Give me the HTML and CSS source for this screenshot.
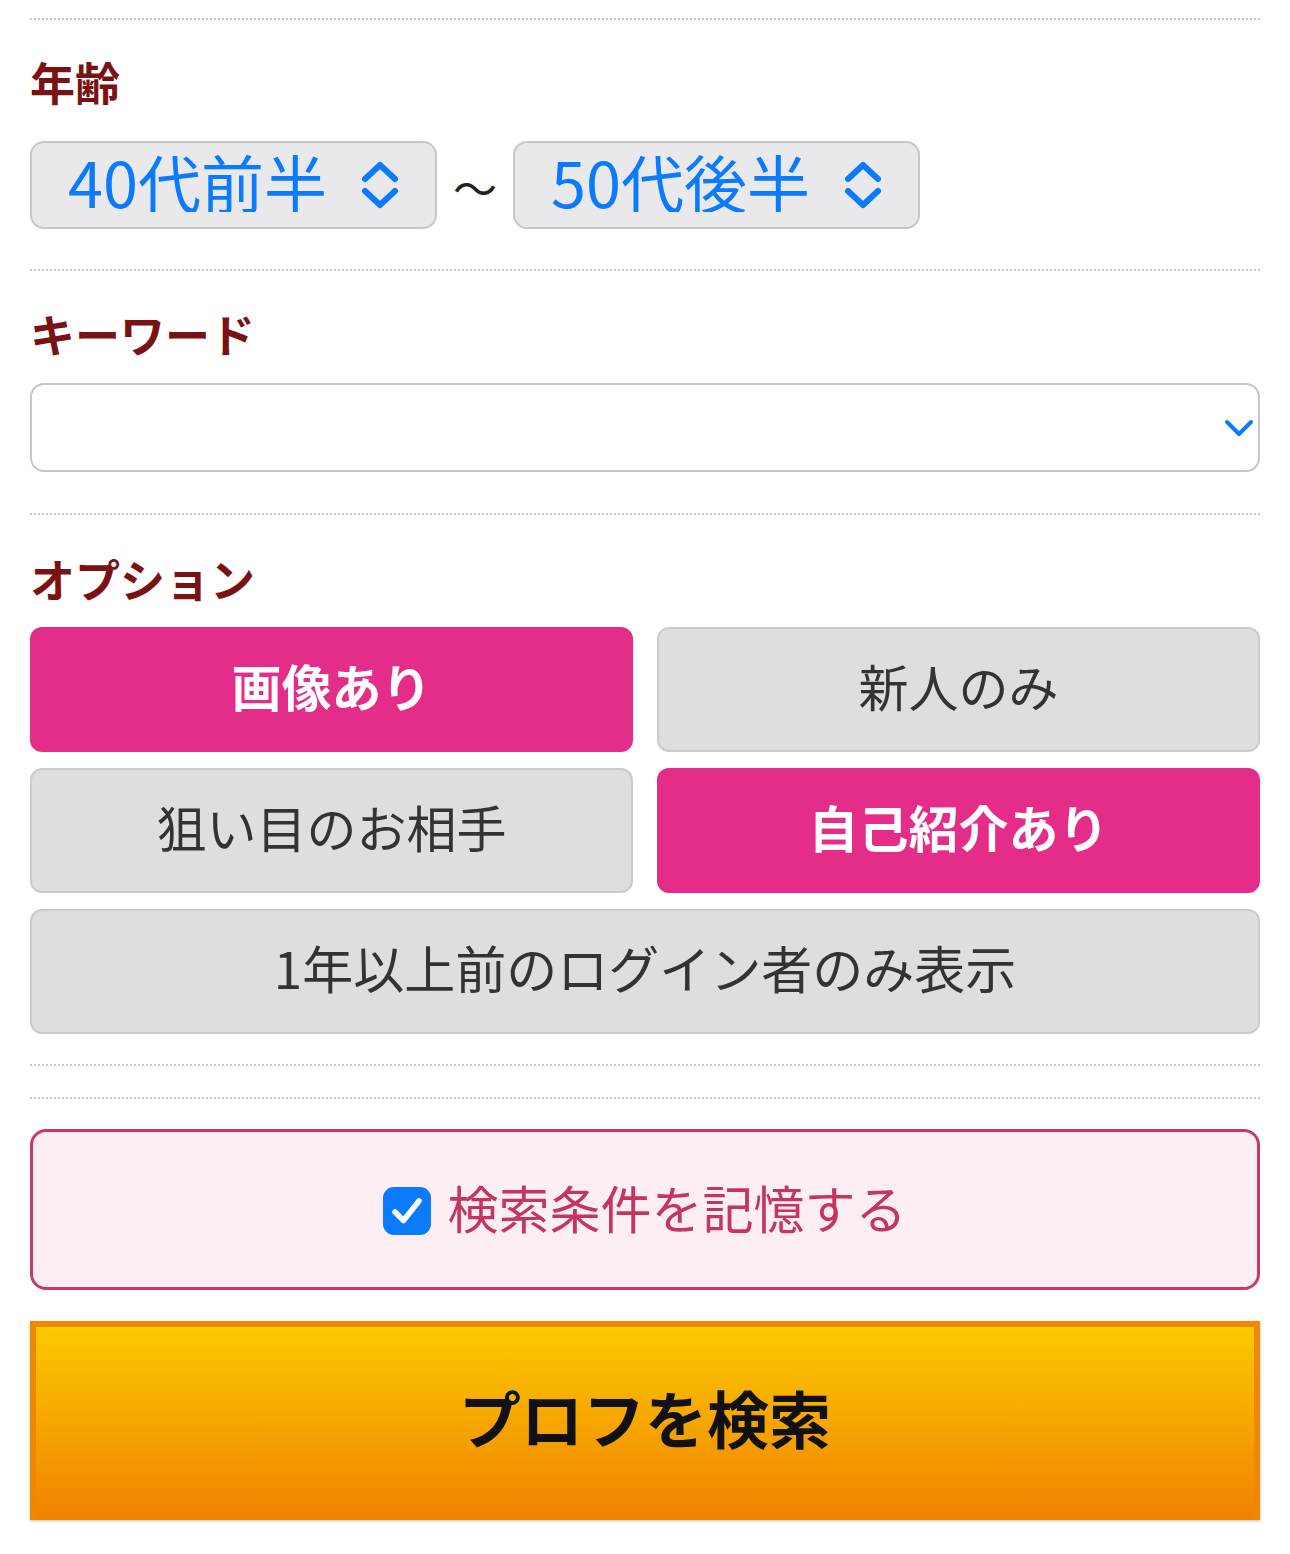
FILE: index.html
```html
<!DOCTYPE html>
<html lang="ja">
  <head>
    <meta charset="UTF-8" />
    <meta name="viewport" content="width=device-width, initial-scale=1.0" />
    <title>プロフ検索</title>
    <link rel="stylesheet" href="styles.css">
  </head>
  <body>
    <form class="search-form">
      <!-- 年齢 -->
      <section class="field field-age">
        <h2 class="field-title">年齢</h2>
        <div class="age-range">
          <label class="select-box">
            <select>
              <option>40代前半</option>
            </select>
            <svg class="updown" viewBox="0 0 42 50" width="42" height="50">
              <path d="M6 19 L21 5 L36 19 M6 31 L21 45 L36 31" fill="none" stroke="#0a7aff" stroke-width="6" stroke-linecap="round" stroke-linejoin="round"/>
            </svg>
          </label>
          <span class="tilde">〜</span>
          <label class="select-box">
            <select>
              <option>50代後半</option>
            </select>
            <svg class="updown" viewBox="0 0 42 50" width="42" height="50">
              <path d="M6 19 L21 5 L36 19 M6 31 L21 45 L36 31" fill="none" stroke="#0a7aff" stroke-width="6" stroke-linecap="round" stroke-linejoin="round"/>
            </svg>
          </label>
        </div>
      </section>

      <!-- キーワード -->
      <section class="field field-keyword">
        <h2 class="field-title">キーワード</h2>
        <label class="keyword-box">
          <select>
            <option></option>
          </select>
          <svg class="down" viewBox="0 0 30 18" width="30" height="18">
            <path d="M3 3 L15 15 L27 3" fill="none" stroke="#0a7aff" stroke-width="4" stroke-linecap="round" stroke-linejoin="round"/>
          </svg>
        </label>
      </section>

      <!-- オプション -->
      <section class="field field-option">
        <h2 class="field-title">オプション</h2>
        <div class="option-grid">
          <button type="button" class="option on">画像あり</button>
          <button type="button" class="option">新人のみ</button>
          <button type="button" class="option">狙い目のお相手</button>
          <button type="button" class="option on">自己紹介あり</button>
          <button type="button" class="option wide">1年以上前のログイン者のみ表示</button>
        </div>
      </section>

      <section class="field field-empty"></section>

      <section class="field field-submit">
        <div class="remember">
          <label class="remember-label">
            <span class="check">
              <svg viewBox="0 0 48 48" width="48" height="48">
                <rect x="0" y="0" width="48" height="48" rx="11" fill="#0a7aff"/>
                <path d="M12 25 L20.5 33.5 L36 14" fill="none" stroke="#fff" stroke-width="5.5" stroke-linecap="round" stroke-linejoin="round"/>
              </svg>
            </span>
            <span class="remember-text">検索条件を記憶する</span>
          </label>
        </div>

        <button type="submit" class="search-btn">プロフを検索</button>
      </section>
    </form>
  </body>
</html>
```

FILE: styles.css
```css
body {
  margin: 0;
  background: #fff;
  font-family: "Noto Sans CJK JP", "Noto Sans", sans-serif;
  color: #333;
}

.search-form {
  padding: 18px 30px 33px;
}

.field {
  border-top: 2px dotted #c9c9c9;
}

.field-title {
  margin: 0;
  font-size: 45px;
  line-height: 52px;
  font-weight: 700;
  color: #7a1214;
}

.field-age {
  padding: 36px 0 40px;
}

.field-age .field-title {
  margin-bottom: 33px;
}

.field-keyword {
  padding: 37px 0 41px;
}

.field-keyword .field-title {
  margin-bottom: 23px;
}

.field-option {
  padding: 38px 0 30px;
}

.field-option .field-title {
  margin-bottom: 22px;
}

.field-empty {
  height: 31px;
}

.field-submit {
  padding-top: 30px;
}

/* age selects */
.age-range {
  display: flex;
  align-items: center;
}

.select-box {
  display: flex;
  align-items: center;
  box-sizing: border-box;
  width: 407px;
  height: 88px;
  padding: 0 34px 0 36px;
  background: #e9e9eb;
  border: 2px solid #c7c7c9;
  border-radius: 14px;
}

.select-box select {
  flex: 1;
  appearance: none;
  -webkit-appearance: none;
  border: none;
  background: transparent;
  padding: 0;
  margin-bottom: 9px;
  font-family: inherit;
  font-size: 63px;
  line-height: 1;
  color: #0a7aff;
}

.updown {
  flex: none;
}

.tilde {
  width: 76px;
  text-align: center;
  font-size: 44px;
  color: #222;
  padding-top: 4px;
}

/* keyword */
.keyword-box {
  display: flex;
  align-items: center;
  box-sizing: border-box;
  height: 89px;
  padding: 0 4px 0 20px;
  background: #fff;
  border: 2px solid #c7c7c9;
  border-radius: 14px;
}

.keyword-box select {
  flex: 1;
  appearance: none;
  -webkit-appearance: none;
  border: none;
  background: transparent;
  font-size: 40px;
  font-family: inherit;
}

/* options */
.option-grid {
  display: grid;
  grid-template-columns: 1fr 1fr;
  gap: 16px 24px;
}

.option {
  height: 125px;
  border: 2px solid #cbcbcb;
  border-radius: 12px;
  background: #dedede;
  color: #333;
  font-family: inherit;
  font-size: 50px;
  font-weight: 400;
  padding: 0 0 10px;
  cursor: pointer;
}

.option.on {
  background: #e32d88;
  border-color: #e32d88;
  color: #fff;
  font-weight: 700;
}

.option.wide {
  grid-column: span 2;
  font-size: 51px;
}

/* remember */
.remember {
  display: flex;
  justify-content: center;
  align-items: center;
  box-sizing: border-box;
  height: 161px;
  margin-bottom: 31px;
  background: #fdeef4;
  border: 3px solid #c8386a;
  border-radius: 16px;
}

.remember-label {
  display: flex;
  align-items: center;
  gap: 16px;
  font-size: 51px;
  color: #c5365f;
  cursor: pointer;
}

.remember-text {
  margin-bottom: 6px;
}

.check {
  display: flex;
  margin-top: 2px;
}

/* search button */
.search-btn {
  display: block;
  box-sizing: border-box;
  width: 100%;
  height: 199px;
  padding: 0 0 14px;
  border: 6px solid #ef8700;
  border-bottom: none;
  background: linear-gradient(#fcc900, #f08200);
  box-shadow: 0 1px 3px rgba(0, 0, 0, 0.25);
  font-family: inherit;
  font-size: 62px;
  font-weight: 700;
  color: #111;
  cursor: pointer;
}
```
